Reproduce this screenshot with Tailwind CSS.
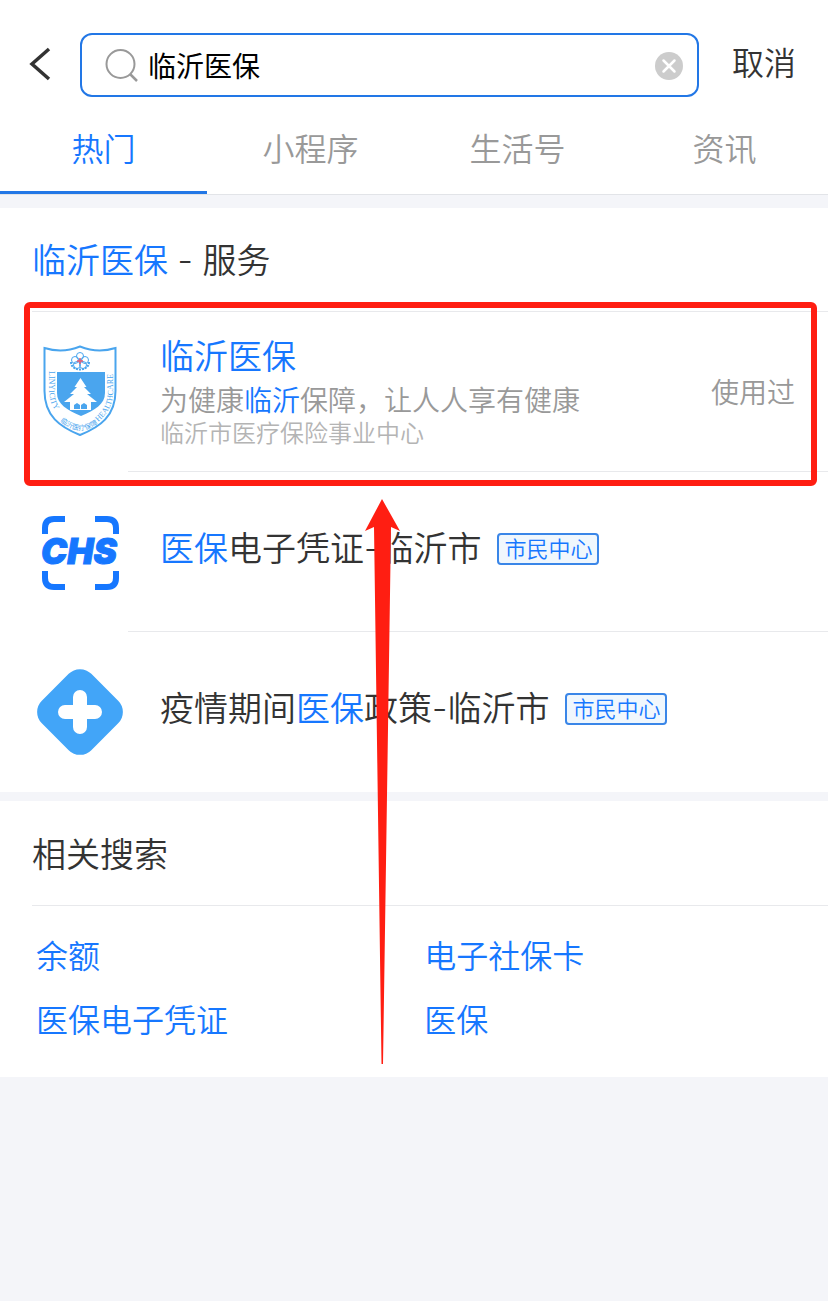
<!DOCTYPE html>
<html lang="zh-CN">
<head>
<meta charset="utf-8">
<meta name="viewport" content="width=device-width, initial-scale=1">
<title>临沂医保 - 搜索</title>
<script src="https://cdn.jsdelivr.net/npm/@tailwindcss/browser@4"></script>
</head>
<body class="min-h-screen bg-[#f4f5f9] font-['Inter','Noto_Sans_CJK_SC',sans-serif] font-[350] text-[#333333]">
<header class="bg-white pt-[33px]">
  <form class="flex h-16 items-center pr-8" role="search">
    <button type="button" aria-label="返回" class="flex h-16 w-20 shrink-0 items-center pl-7">
      <svg class="h-9 w-6" viewBox="0 0 24 36" fill="none" stroke="#333" stroke-width="3.500"><path d="M21 2 4 17 21 32"/></svg>
    </button>
    <div class="flex h-16 min-w-0 flex-1 items-center rounded-xl border-2 border-[#2277e6] pr-3 pl-[22px]">
      <svg class="h-9 w-9 shrink-0" viewBox="0 0 36 36" fill="none" stroke="#999" stroke-width="2"><circle cx="16.500" cy="17" r="14"/><path d="m26 27 7 7" stroke-width="2.500"/></svg>
      <input type="text" aria-label="搜索" value="临沂医保" class="h-12 min-w-0 flex-1 bg-transparent pl-2 text-[28px] font-normal text-black outline-none">
      <button type="button" aria-label="清除" class="shrink-0">
        <svg class="h-8 w-8" viewBox="0 0 32 32"><circle cx="16" cy="17" r="14" fill="#ccc"/><path d="m10.500 11.500 11 11m0-11-11 11" stroke="#fff" stroke-width="2.500" stroke-linecap="round"/></svg>
      </button>
    </div>
    <button type="button" class="ml-[33px] h-16 shrink-0 pb-[2px] text-[32px] leading-[60px]">取消</button>
  </form>
  <nav class="grid h-[98px] grid-cols-4 border-b border-[#e2e4e8] text-center text-[32px] text-[#999999]">
    <a href="#hot" aria-current="page" class="border-b-[3px] border-[#2277e6] pt-7 leading-[50px] text-[#1677ff]">热门</a>
    <a href="#mini" class="pt-7 leading-[50px]">小程序</a>
    <a href="#life" class="pt-7 leading-[50px]">生活号</a>
    <a href="#news" class="pt-7 leading-[50px]">资讯</a>
  </nav>
</header>

<main>
  <section class="relative mt-[13px] bg-white">
    <h1 class="h-[103px] pl-8 text-[34px] leading-[106px]"><span class="text-[#1677ff]">临沂医保</span> - 服务</h1>
    <ul>
      <li class="relative ml-8 border-t border-[#e8e9ec]">
        <a href="#ybzx" class="flex h-[159px]">
          <svg class="mt-[30px] ml-2 h-24 w-20 shrink-0" viewBox="0 0 80 96">
            <path d="M4.500 6C17 10 29 9 40 4.500 51 9 63 10 75.500 6V49C75.500 74 60 85 40 93 20 85 4.500 74 4.500 49Z" fill="#fff" stroke="#4aa5ee" stroke-width="2"/>
            <path d="M17 30H65V51C65 62 55 68 41 74 27 68 17 62 17 51Z" fill="#4aa5ee"/>
            <path d="m40.500 36-6 9h2.500l-7 7h4l-10 8h10.500v8h12V60H57l-10-8h4l-7-7h2.500Z" fill="#fff"/>
            <path d="M30 59h21v9H30Z" fill="#fff"/>
            <path d="M34 67v-4l3-2 3 2v4Zm7 0v-4l3-2 3 2v4Z" fill="#4aa5ee"/>
            <g fill="none" stroke="#4aa5ee" stroke-width="1"><circle cx="40" cy="14" r="3.500"/><circle cx="45" cy="18" r="3.500"/><circle cx="43" cy="23" r="3.500"/><circle cx="37" cy="23" r="3.500"/><circle cx="35" cy="18" r="3.500"/><path d="M31 20c0 10 18 10 18 0" stroke-width="2" stroke-dasharray="2 1"/></g>
            <path d="M40 16v6m-3-3h6" stroke="#e65b70" stroke-width="1.500"/>
            <path id="crestLeft" d="M9 29V46C9 60 14 69 22 76" fill="none"/>
            <path id="crestRight" d="M58 80C69 70 73 62 73 50V24" fill="none"/>
            <path id="crestBottom" d="M20 79Q40 97 60 80" fill="none"/>
            <g fill="#4aa5ee" font-size="8" font-family="Liberation Serif, serif" font-weight="400">
              <text><textPath href="#crestLeft">LINYICITY</textPath></text>
              <text><textPath href="#crestRight">HEALTHCARE</textPath></text>
              <text font-family="Noto Sans CJK SC, sans-serif" font-size="7"><textPath href="#crestBottom">临沂医疗保障</textPath></text>
            </g>
          </svg>
          <div class="min-w-0 flex-1 pt-[21px] pl-10">
            <h2 class="text-[34px] leading-[48px] text-[#1677ff]">临沂医保</h2>
            <p class="text-[28px] leading-10 text-[#999999]">为健康<span class="text-[#1677ff]">临沂</span>保障，让人人享有健康</p>
            <p class="text-2xl leading-[26px] text-[#b4b4b4]">临沂市医疗保险事业中心</p>
          </div>
          <span class="shrink-0 pr-[33px] text-[28px] leading-[162px] text-[#999999]">使用过</span>
        </a>
        <div class="pointer-events-none absolute -top-[10px] right-[11px] -bottom-[15px] -left-2 z-10 rounded-md border-[6px] border-[#ff1e12]"></div>
      </li>
      <li>
        <a href="#pingzheng" class="flex h-40 pl-10">
          <svg class="mt-[43px] h-20 w-20 shrink-0" viewBox="0 0 80 80">
            <g fill="none" stroke="#1677ff" stroke-width="6"><path d="M5 20V14Q5 5 14 5H25M55 5H67Q76 5 76 14V20M5 57V64Q5 73 14 73H25M55 73H67Q76 73 76 64V57"/></g>
            <text x="1" y="50" fill="#1677ff" stroke="#1677ff" stroke-width="1" font-family="Inter, sans-serif" font-size="35" font-weight="900" font-style="italic">CHS</text>
          </svg>
          <div class="ml-2 flex min-w-0 flex-1 items-center border-t border-[#e8e9ec] pb-[6px] pl-8">
            <h2 class="text-[34px] leading-[48px]"><span class="text-[#1677ff]">医保</span>电子凭证-临沂市</h2>
            <span class="ml-4 rounded border-2 border-[#3a86e8] bg-[#f0f7fd] px-[5px] text-[22px] leading-7 text-[#1677ff]">市民中心</span>
          </div>
        </a>
      </li>
      <li>
        <a href="#zhengce" class="flex h-[161px] pl-9">
          <svg class="mt-[37px] h-[88px] w-[88px] shrink-0" viewBox="0 0 88 88"><rect x="9" y="9" width="70" height="70" rx="16" transform="rotate(45 44 44)" fill="#42a5f8"/><path d="M44 29v30M29 44h30" stroke="#fff" stroke-width="14" stroke-linecap="round"/></svg>
          <div class="ml-1 flex min-w-0 flex-1 items-center border-t border-[#e8e9ec] pb-[6px] pl-8">
            <h2 class="text-[34px] leading-[48px]">疫情期间<span class="text-[#1677ff]">医保</span>政策-临沂市</h2>
            <span class="ml-4 rounded border-2 border-[#3a86e8] bg-[#f0f7fd] px-[5px] text-[22px] leading-7 text-[#1677ff]">市民中心</span>
          </div>
        </a>
      </li>
    </ul>
    <svg class="pointer-events-none absolute top-[291px] left-[364px] z-10 h-[566px] w-9" viewBox="0 0 36 566"><path d="M18 0 36 32 27 28 19 565H17.500L10 28 1 32Z" fill="#ff1e12"/></svg>
  </section>

  <section class="mt-[9px] bg-white pb-8">
    <h2 class="ml-8 h-[105px] border-b border-[#e8e9ec] text-[34px] leading-[108px]">相关搜索</h2>
    <div class="grid grid-cols-[47fr_53fr] gap-y-4 pt-[27px] pl-9 text-[32px] leading-[48px] text-[#1677ff]">
      <a href="#q1">余额</a>
      <a href="#q2" class="pl-4">电子社保卡</a>
      <a href="#q3">医保电子凭证</a>
      <a href="#q4" class="pl-4">医保</a>
    </div>
  </section>
</main>
</body>
</html>
